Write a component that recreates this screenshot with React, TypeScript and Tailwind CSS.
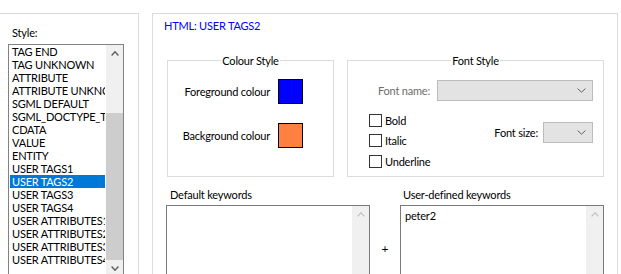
import React from "react";

const Chev = ({ dir, color, w = 9, sw = 1.3 }: { dir: "up" | "down"; color: string; w?: number; sw?: number }) => (
  <svg width={w} height={5} viewBox={`0 0 ${w} 5`}>
    <path
      d={dir === "up" ? `M0.6 4.4 L${w / 2} 0.8 L${w - 0.6} 4.4` : `M0.6 0.6 L${w / 2} 4.2 L${w - 0.6} 0.6`}
      fill="none"
      stroke={color}
      strokeWidth={sw}
    />
  </svg>
);

const items = [
  "TAG END",
  "TAG UNKNOWN",
  "ATTRIBUTE",
  "ATTRIBUTE UNKNOWN",
  "SGML DEFAULT",
  "SGML_DOCTYPE_TEXT",
  "CDATA",
  "VALUE",
  "ENTITY",
  "USER TAGS1",
  "USER TAGS2",
  "USER TAGS3",
  "USER TAGS4",
  "USER ATTRIBUTES1",
  "USER ATTRIBUTES2",
  "USER ATTRIBUTES3",
  "USER ATTRIBUTES4",
];

const Check = ({ label }: { label: string }) => (
  <div className="h-[20.5px] flex items-center gap-[3px]">
    <div className="w-[13px] h-[13px] border border-[#333333] bg-white" />
    <span className="leading-[13px]">{label}</span>
  </div>
);

const Combo = ({ w }: { w: string }) => (
  <div className={`${w} h-[21px] bg-[#e3e3e3] border border-[#bcbcbc] flex items-center justify-end pr-[6px]`}>
    <Chev dir="down" color="#606060" w={9} sw={1} />
  </div>
);

const KeywordBox = ({ text }: { text?: string }) => (
  <div className="w-[204px] h-[100px] border border-[#7a7a7a] flex">
    <div className="flex-1 pl-[4px] pt-[3px] leading-[13px]">{text}</div>
    <div className="w-[17px] bg-[#f0f0f0] flex flex-col">
      <div className="h-[17px] flex items-center justify-center">
        <Chev dir="up" color="#c3c3c3" w={8} sw={1.3} />
      </div>
    </div>
  </div>
);

export default function App() {
  return (
    <div className="w-[621px] h-[274px] overflow-hidden bg-white flex items-stretch pt-[13px] font-['Lato',sans-serif] text-[11px] tracking-[-0.2px] text-black">
      {/* Left panel */}
      <div className="w-[139px] shrink-0 border-t border-r border-[#dcdcdc] pl-[8px] flex flex-col">
        <div className="mt-[12px] pl-[4px] h-[13px] leading-[13px]">Style:</div>
        <div className="mt-[5px] w-[116px] h-[234px] shrink-0 border border-[#828282] flex">
          <div className="w-[97px] flex flex-col overflow-hidden">
            {items.map((it) => {
              const sel = it === "USER TAGS2";
              return (
                <div
                  key={it}
                  className={`h-[13px] mx-[1px] pl-[2px] leading-[13px] whitespace-nowrap overflow-hidden ${
                    sel ? "bg-[#0078d7] text-white" : "text-[#000000]"
                  }`}
                >
                  {it}
                </div>
              );
            })}
          </div>
          <div className="w-[17px] bg-[#f0f0f0] flex flex-col">
            <div className="h-[17px] flex items-center justify-center">
              <Chev dir="up" color="#606060" w={8} sw={1.5} />
            </div>
            <div className="h-[51px]" />
            <div className="h-[147px] bg-[#cdcdcd]" />
            <div className="h-[17px] flex items-center justify-center">
              <Chev dir="down" color="#606060" w={8} sw={1.5} />
            </div>
          </div>
        </div>
      </div>

      {/* Main panel */}
      <div className="ml-[13px] w-[466px] shrink-0 border-t border-l border-r border-[#dcdcdc] flex flex-col">
        <div className="pl-[11px] pt-[5px] h-[18px] leading-[13px] text-[#0000ff]">HTML: USER TAGS2</div>

        <div className="flex gap-[13px] ml-[14px] mt-[22px]">
          <fieldset className="w-[167px] h-[123px] border border-[#dcdcdc] m-0 p-0 min-w-0">
            <legend className="mx-auto px-[1px] leading-[13px]">Colour Style</legend>
            <div className="pt-[12px] pr-[30px] flex flex-col items-end gap-[19px]">
              <div className="flex items-center gap-[8px]">
                <span className="leading-[13px]">Foreground colour</span>
                <div className="w-[25px] h-[25px] border border-black bg-[#0000ff]" />
              </div>
              <div className="flex items-center gap-[8px]">
                <span className="leading-[13px]">Background colour</span>
                <div className="w-[25px] h-[25px] border border-black bg-[#ff8040]" />
              </div>
            </div>
          </fieldset>

          <fieldset className="w-[257px] h-[123px] border border-[#dcdcdc] m-0 p-0 min-w-0">
            <legend className="mx-auto px-[1px] leading-[13px]">Font Style</legend>
            <div className="mt-[13px] pr-[10px] flex justify-end items-center gap-[7px]">
              <span className="leading-[13px] text-[#6d6d6d]">Font name:</span>
              <Combo w="w-[156px]" />
            </div>
            <div className="mt-[9px] pr-[10px] flex justify-between">
              <div className="pl-[21px] flex flex-col">
                <Check label="Bold" />
                <Check label="Italic" />
                <Check label="Underline" />
              </div>
              <div className="mt-[12px] self-start flex items-center gap-[5px]">
                <span className="leading-[13px]">Font size:</span>
                <Combo w="w-[50px]" />
              </div>
            </div>
          </fieldset>
        </div>

        <div className="flex ml-[13px] mt-[11px]">
          <div className="flex flex-col">
            <div className="pl-[4px] h-[13px] leading-[13px]">Default keywords</div>
            <div className="mt-[4px]">
              <KeywordBox />
            </div>
          </div>
          <div className="w-[30px] pt-[54px] text-center leading-[13px] text-[12px]">+</div>
          <div className="flex flex-col">
            <div className="pl-[3px] h-[13px] leading-[13px]">User-defined keywords</div>
            <div className="mt-[4px]">
              <KeywordBox text="peter2" />
            </div>
          </div>
        </div>
      </div>
    </div>
  );
}
